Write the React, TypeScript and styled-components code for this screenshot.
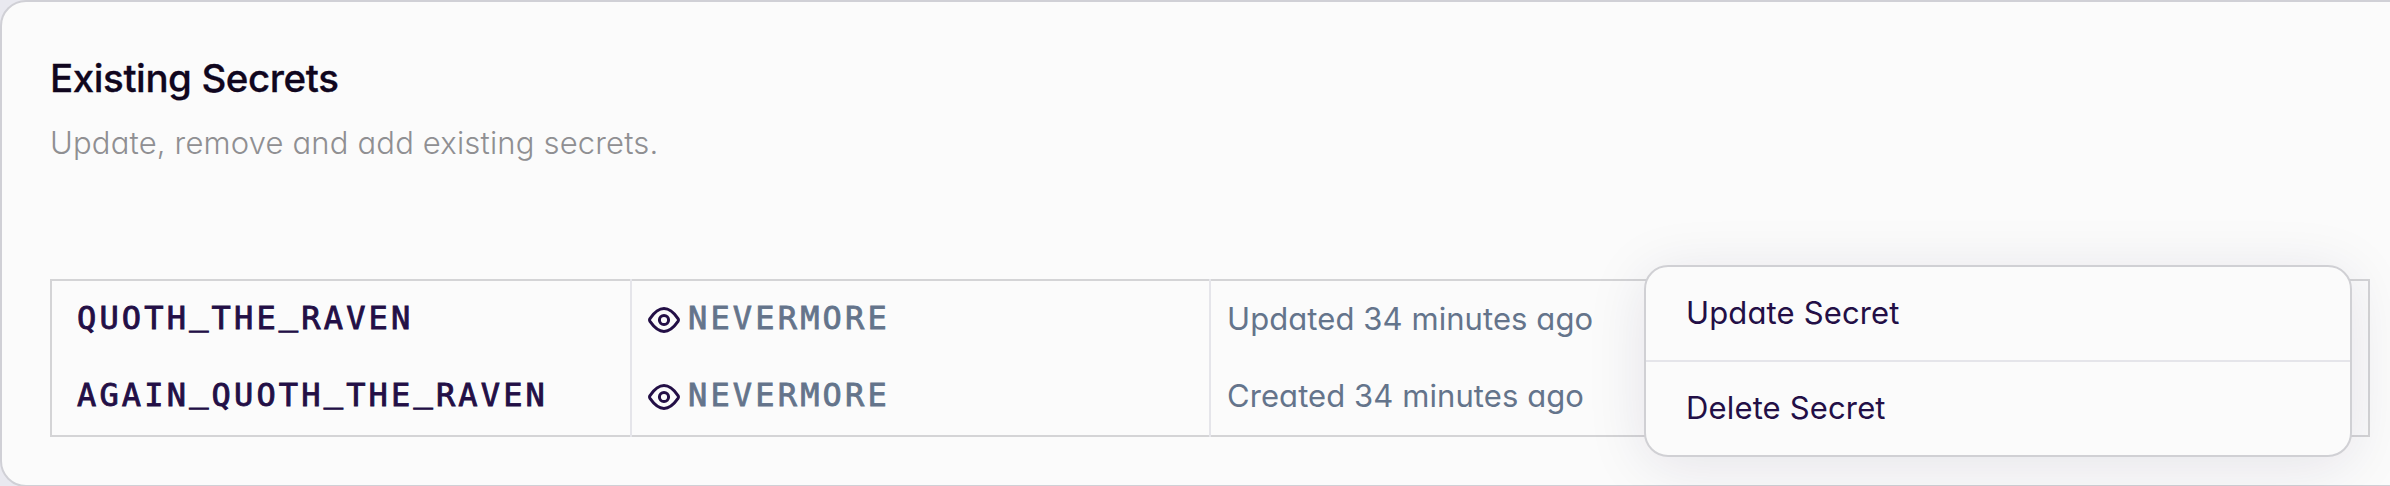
import React from "react";
import styled, { createGlobalStyle } from "styled-components";

const GlobalStyle = createGlobalStyle`
  * { box-sizing: border-box; }
  body {
    margin: 0;
    background: #e9e9f0;
    font-family: Inter, "Liberation Sans", sans-serif;
    font-feature-settings: "cv11";
  }
`;

const Viewport = styled.div`
  height: 486px;
  overflow: hidden;
`;

const Card = styled.section`
  position: relative;
  width: 2420px;
  height: 487px;
  padding: 48px 48px 0;
  border: 2px solid #d0d0d6;
  border-radius: 26px;
  background: #fbfbfb;
`;

const Title = styled.h2`
  margin: 0;
  height: 60px;
  line-height: 56px;
  font-size: 38.5px;
  font-weight: 500;
  letter-spacing: -0.42px;
  color: #10061e;
  -webkit-text-stroke: 0.3px #10061e;
`;

const Subtitle = styled.p`
  margin: 8px 0 0;
  height: 48px;
  line-height: 50px;
  font-size: 31px;
  font-weight: 300;
  letter-spacing: 0.17px;
  color: #8f8f92;
`;

const Table = styled.div`
  display: flex;
  width: 2320px;
  height: 158px;
  margin-top: 113px;
  border: 2px solid #d4d4d6;
`;

const Column = styled.div<{ $width: number; $divided?: boolean }>`
  display: flex;
  flex-direction: column;
  width: ${(p) => p.$width}px;
  margin: -2px 0;
  padding: 2px 0;
  border-right: ${(p) => (p.$divided ? "2px solid #e5e5ea" : "none")};
`;

const Cell = styled.div<{ $inset: number }>`
  display: flex;
  align-items: center;
  height: 77px;
  padding-left: ${(p) => p.$inset}px;
  white-space: nowrap;
`;

const Code = styled.span<{ $color: string; $weight: number }>`
  font-family: "DejaVu Sans Mono", monospace;
  font-size: 32px;
  line-height: 72px;
  padding-bottom: 3px;
  letter-spacing: 3.16px;
  color: ${(p) => p.$color};
  -webkit-text-stroke: ${(p) => p.$weight}px ${(p) => p.$color};
`;

const Underscore = styled.span`
  vertical-align: 4px;
  line-height: 0;
`;

const Stamp = styled.span`
  font-size: 31px;
  line-height: 76px;
  padding-bottom: 1px;
  letter-spacing: 0.08px;
  color: #64748b;
`;

const EyeSvg = styled.svg`
  display: block;
  flex: none;
  width: 32px;
  height: 26px;
  margin-right: 8px;
`;

const Menu = styled.div`
  position: absolute;
  left: 1642px;
  top: 263px;
  width: 708px;
  height: 192px;
  border: 2px solid #d0d0d4;
  border-radius: 24px;
  background: #fbfbfb;
  box-shadow: 0 8px 60px rgba(30, 15, 70, 0.1);
`;

const MenuItem = styled.div`
  height: 95px;
  padding-left: 40px;
  line-height: 92px;
  font-size: 31px;
  letter-spacing: 0.15px;
  color: #230f46;

  &:not(:last-child) {
    border-bottom: 2px solid #e5e5ea;
  }
`;

const Eye = () => (
  <EyeSvg viewBox="0 0 32 26" fill="none" stroke="#230f46" strokeWidth="3">
    <path d="M2 14.4Q1.1 13 2 11.6C5.6 6.4 9.8 1.6 16 1.6S26.4 6.4 30 11.6Q30.9 13 30 14.4C26.4 19.6 22.2 24.4 16 24.4S5.6 19.6 2 14.4Z" />
    <circle cx="16" cy="13" r="4.6" />
  </EyeSvg>
);

/* Lifts each underscore so that it sits just under the baseline. */
const SecretName = ({ name }: { name: string }) => (
  <Code $color="#230f46" $weight={0.9}>
    {name.split("_").map((word, i) => (
      <React.Fragment key={i}>
        {i > 0 && <Underscore>_</Underscore>}
        {word}
      </React.Fragment>
    ))}
  </Code>
);

const secrets = [
  { name: "QUOTH_THE_RAVEN", value: "NEVERMORE", stamp: "Updated 34 minutes ago" },
  { name: "AGAIN_QUOTH_THE_RAVEN", value: "NEVERMORE", stamp: "Created 34 minutes ago" },
];

export default function App() {
  return (
    <Viewport>
      <GlobalStyle />
      <Card>
        <Title>Existing Secrets</Title>
        <Subtitle>Update, remove and add existing secrets.</Subtitle>
        <Table>
          <Column $width={580} $divided>
            {secrets.map((s) => (
              <Cell key={s.name} $inset={25}>
                <SecretName name={s.name} />
              </Cell>
            ))}
          </Column>
          <Column $width={579} $divided>
            {secrets.map((s) => (
              <Cell key={s.name} $inset={16}>
                <Eye />
                <Code $color="#64748b" $weight={0.8}>{s.value}</Code>
              </Cell>
            ))}
          </Column>
          <Column $width={1157}>
            {secrets.map((s) => (
              <Cell key={s.name} $inset={16}>
                <Stamp>{s.stamp}</Stamp>
              </Cell>
            ))}
          </Column>
        </Table>
        <Menu>
          <MenuItem>Update Secret</MenuItem>
          <MenuItem>Delete Secret</MenuItem>
        </Menu>
      </Card>
    </Viewport>
  );
}
